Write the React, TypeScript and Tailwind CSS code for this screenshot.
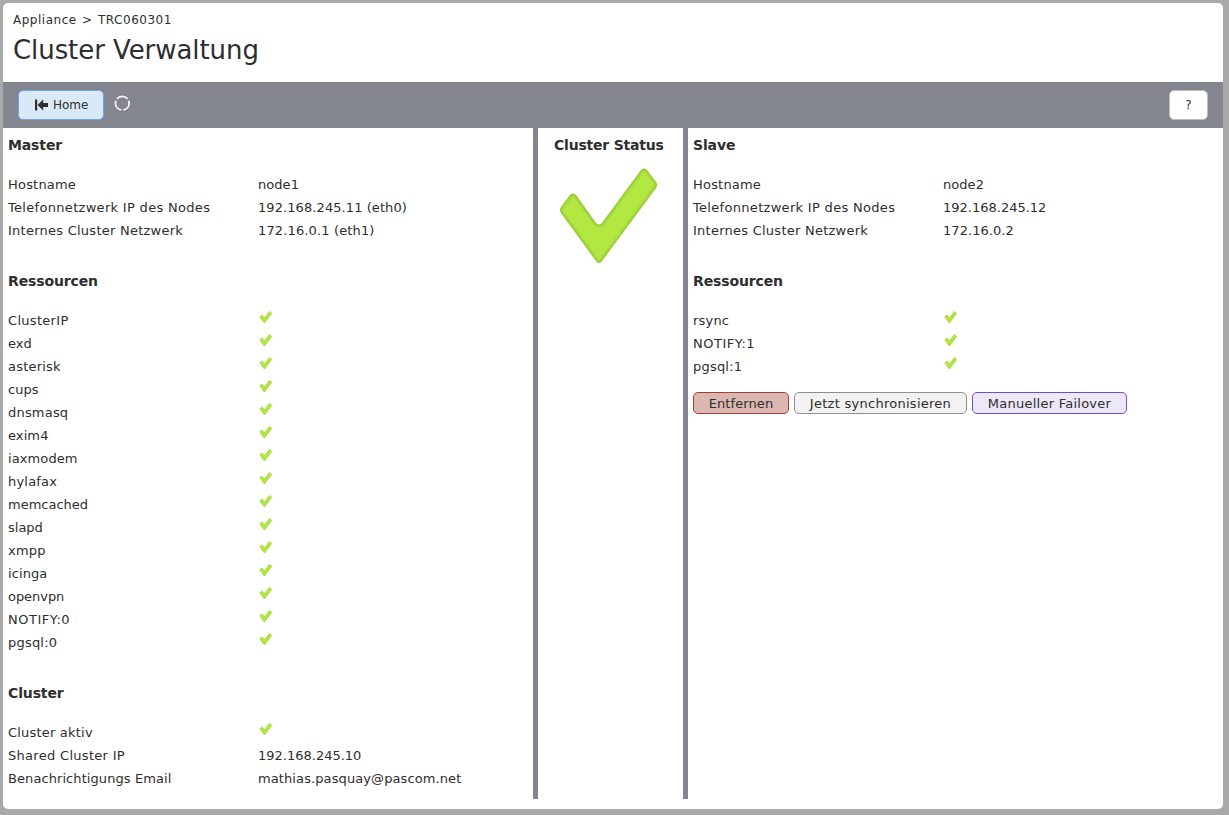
import React from 'react';

type Item = { label: string; value?: string; labelClass?: string; valueClass?: string };

const CHECK_PATH =
  'M1 39 Q-1 42 1 45 L36 93 Q39 97 42 93 L96 20 Q98 17 96 14 L87 2 Q84 -1 81 2 L42 55 Q39 58 36 55 L16 27 Q13 24 10 27 Z';

function CheckIcon({ className }: { className: string }) {
  return (
    <svg viewBox="0 0 97 96" preserveAspectRatio="none" className={className} aria-hidden="true">
      <defs>
        <clipPath id="check-clip">
          <path d={CHECK_PATH} />
        </clipPath>
        <filter id="check-soft" x="-10%" y="-10%" width="120%" height="120%">
          <feGaussianBlur stdDeviation="1.5" />
        </filter>
      </defs>
      <g clipPath="url(#check-clip)">
        <rect width="97" height="96" fill="#b3e843" />
        <path d={CHECK_PATH} fill="none" stroke="#93c236" strokeWidth="3.5" filter="url(#check-soft)" />
      </g>
    </svg>
  );
}

function SmallCheck() {
  return (
    <svg viewBox="0 0 13 13" className="mt-px ml-px block h-[13px] w-[13px]" aria-hidden="true">
      <path d="M1.8 5.6 L5.4 10.6 L11.7 2.2" fill="none" stroke="#a6d73e" strokeWidth="3.6" />
      <path d="M2 6 L5.4 10.2 L11.4 2.4" fill="none" stroke="#b3e843" strokeWidth="2.2" />
    </svg>
  );
}

function Section({ title, items }: { title: string; items: Item[] }) {
  return (
    <section>
      <h2 className="h-[45px] pt-[7px] text-[14px] leading-5 font-bold tracking-[-0.13px]">{title}</h2>
      <dl>
        {items.map((item) => (
          <div key={item.label} className="flex h-[23px]">
            <dt className={`w-[250px] leading-[23px] ${item.labelClass ?? 'tracking-[0.2px]'}`}>{item.label}</dt>
            <dd className={`leading-[23px] ${item.valueClass ?? 'tracking-[0.05px]'}`}>{item.value ?? <SmallCheck />}</dd>
          </div>
        ))}
      </dl>
    </section>
  );
}

const masterInfo: Item[] = [
  { label: 'Hostname', value: 'node1' },
  { label: 'Telefonnetzwerk IP des Nodes', value: '192.168.245.11 (eth0)', labelClass: 'tracking-[0.31px]', valueClass: 'tracking-[0.08px]' },
  { label: 'Internes Cluster Netzwerk', value: '172.16.0.1 (eth1)', labelClass: 'tracking-[0.25px]', valueClass: 'tracking-[0.14px]' },
];
const masterResources: Item[] = [
  { label: 'ClusterIP', labelClass: 'tracking-[0.3px]' },
  { label: 'exd', labelClass: 'tracking-[0px]' },
  { label: 'asterisk' },
  { label: 'cups', labelClass: 'tracking-[0px]' },
  { label: 'dnsmasq' },
  { label: 'exim4', labelClass: 'tracking-[0.1px]' },
  { label: 'iaxmodem', labelClass: 'tracking-[0.1px]' },
  { label: 'hylafax' },
  { label: 'memcached', labelClass: 'tracking-[0px]' },
  { label: 'slapd', labelClass: 'tracking-[0px]' },
  { label: 'xmpp' },
  { label: 'icinga', labelClass: 'tracking-[0.1px]' },
  { label: 'openvpn', labelClass: 'tracking-[-0.05px]' },
  { label: 'NOTIFY:0', labelClass: 'tracking-[0.5px]' },
  { label: 'pgsql:0' },
];
const clusterInfo: Item[] = [
  { label: 'Cluster aktiv' },
  { label: 'Shared Cluster IP', value: '192.168.245.10', labelClass: 'tracking-[0.3px]', valueClass: 'tracking-[0px]' },
  { label: 'Benachrichtigungs Email', value: 'mathias.pasquay@pascom.net', labelClass: 'tracking-[0.08px]', valueClass: 'tracking-[0.1px]' },
];
const slaveInfo: Item[] = [
  { label: 'Hostname', value: 'node2' },
  { label: 'Telefonnetzwerk IP des Nodes', value: '192.168.245.12', labelClass: 'tracking-[0.31px]', valueClass: 'tracking-[0px]' },
  { label: 'Internes Cluster Netzwerk', value: '172.16.0.2', labelClass: 'tracking-[0.25px]' },
];
const slaveResources: Item[] = [
  { label: 'rsync' },
  { label: 'NOTIFY:1', labelClass: 'tracking-[0.5px]' },
  { label: 'pgsql:1' },
];

export default function App() {
  return (
    <div className="h-[815px] w-[1229px] overflow-hidden bg-[#a9a9a9] pt-[3px] pl-[3px] font-['DejaVu_Sans',sans-serif] text-[13px] text-[#2e2e2e]">
      <main className="flex h-[806px] w-[1220px] flex-col rounded-[5px] bg-white">
        <header className="h-[79px] pt-[7px] pl-[10px]">
          <nav className="text-[12px] leading-5 tracking-[0.52px] [word-spacing:1px]">Appliance &gt; TRC060301</nav>
          <h1 className="pt-px text-[26px] leading-[38px] tracking-[-0.07px]">Cluster Verwaltung</h1>
        </header>
        <div className="flex h-[46px] shrink-0 items-start justify-between bg-[#83868e] px-[15px] pt-2">
          <div className="flex">
            <button className="flex h-[30px] w-[86px] items-center rounded-[5px] border border-[#6ea5ef] bg-[#d9e9f6] pl-4 text-[12px] tracking-[0px]">
              <svg viewBox="0 0 13 12" className="mr-[5px] h-3 w-[13px]" fill="#2e2e2e" aria-hidden="true">
                <path d="M0 0.5h2.2v11H0z M2.6 6 L8.2 0.5 V4 H13 V8 H8.2 V11.5 Z" />
              </svg>
              Home
            </button>
            <svg viewBox="0 0 16 16" className="mt-[5px] ml-[10px] h-4 w-4" fill="none" stroke="#f4f4f4" strokeWidth="1.8" aria-hidden="true">
              <circle cx="8.3" cy="8.2" r="6.8" pathLength="99" strokeDasharray="28 5" strokeDashoffset="-27.25" />
            </svg>
          </div>
          <button className="h-[30px] w-[39px] rounded-[5px] border border-[#bcbcbc] bg-white text-[12px]">?</button>
        </div>
        <div className="flex h-[671px]">
          <div className="flex w-[535px] flex-col gap-[22px] border-r-[5px] border-[#83868e] pl-[5px]">
            <Section title="Master" items={masterInfo} />
            <Section title="Ressourcen" items={masterResources} />
            <Section title="Cluster" items={clusterInfo} />
          </div>
          <div className="w-[150px] border-r-[5px] border-[#83868e] pl-[15px]">
            <h2 className="h-[40px] pt-[7px] pl-px text-[14px] leading-5 font-bold tracking-[-0.2px] whitespace-nowrap">Cluster Status</h2>
            <CheckIcon className="ml-[7px] h-[96px] w-[97px]" />
          </div>
          <div className="flex flex-1 flex-col pl-[5px]">
            <div className="flex flex-col gap-[22px]">
              <Section title="Slave" items={slaveInfo} />
              <Section title="Ressourcen" items={slaveResources} />
            </div>
            <div className="mt-[14px] flex gap-[5px]">
              <button className="h-[22px] w-[96px] rounded-[5px] border border-[#a63e31] bg-[#dcb6b1] pt-px leading-[19px] tracking-[0.1px]">Entfernen</button>
              <button className="h-[22px] w-[173px] rounded-[5px] border border-[#8e8e8e] bg-[#f2f2f2] pt-px leading-[19px] tracking-[0.27px]">Jetzt synchronisieren</button>
              <button className="h-[22px] w-[155px] rounded-[5px] border border-[#7548d2] bg-[#ede7f7] pt-px leading-[19px] tracking-[0.25px]">Manueller Failover</button>
            </div>
          </div>
        </div>
      </main>
    </div>
  );
}
